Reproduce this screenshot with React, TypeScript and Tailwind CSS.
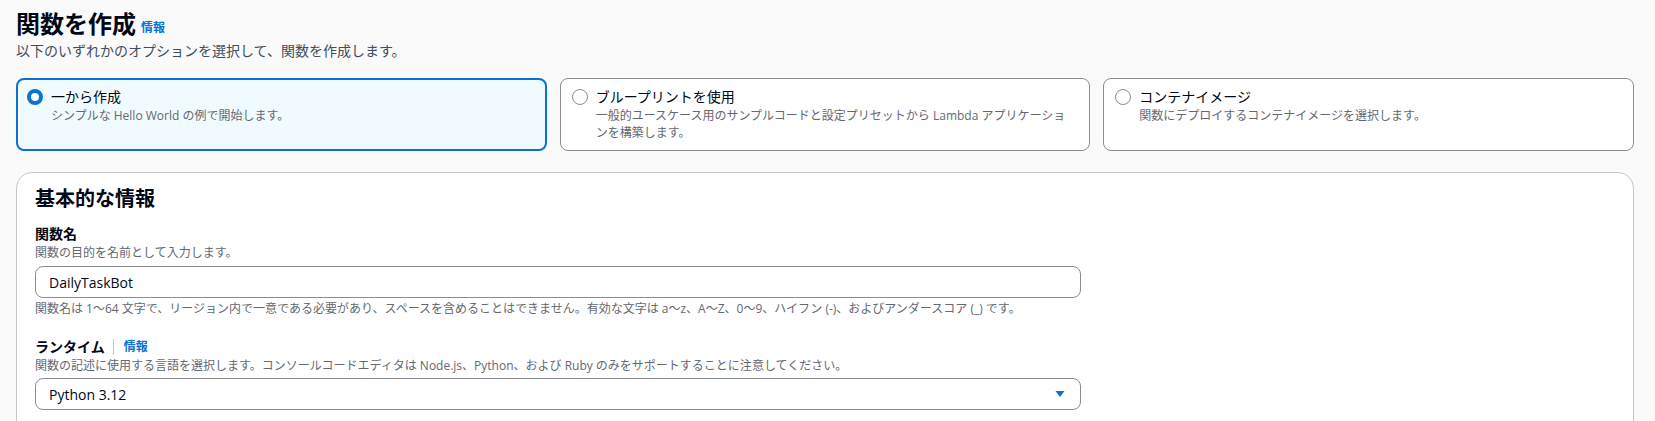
import React from "react";

const font = {
  fontFamily: '"Open Sans", "Noto Sans CJK JP", "Noto Sans", sans-serif',
};

const Radio = ({ checked }: { checked: boolean }) =>
  checked ? (
    <span className="mt-[2px] block h-[16px] w-[16px] shrink-0 rounded-full border-[4px] border-[#0972d3] bg-white" />
  ) : (
    <span className="mt-[2px] block h-[16px] w-[16px] shrink-0 rounded-full border border-[#8c8c94] bg-white" />
  );

const Tile = ({
  checked,
  title,
  children,
}: {
  checked: boolean;
  title: string;
  children: React.ReactNode;
}) => (
  <div
    className={
      checked
        ? "h-[73px] rounded-[8px] border-2 border-[#0972d3] bg-[#f0fbff] pl-[9px] pt-[7px] pr-[18px]"
        : "h-[73px] rounded-[8px] border border-[#8c8c94] bg-white pl-[11px] pt-[8px] pr-[19px]"
    }
  >
    <div className="flex gap-[8px]">
      <Radio checked={checked} />
      <div>
        <div className="text-[14px] leading-[20px] text-[#000716]">{title}</div>
        <div className="text-[12px] leading-[17px] text-[#656871]">{children}</div>
      </div>
    </div>
  </div>
);

const InfoLink = () => (
  <a className="text-[12px] font-bold leading-[16px] text-[#0972d3]" href="#">
    情報
  </a>
);

export default function App() {
  return (
    <div className="min-h-screen bg-[#fafafa] pl-[16px] pr-[21px] pt-[9px]" style={font}>
      <div className="flex items-center gap-[5px]">
        <h1 className="text-[24px] font-bold leading-[30px] text-[#000716]">関数を作成</h1>
        <span className="pt-[3px]">
          <InfoLink />
        </span>
      </div>
      <p className="mt-[2px] text-[14px] leading-[20px] text-[#414d5c]">
        以下のいずれかのオプションを選択して、関数を作成します。
      </p>

      <div className="mt-[17px] grid grid-cols-3 gap-[13px]">
        <Tile checked title="一から作成">
          シンプルな Hello World の例で開始します。
        </Tile>
        <Tile checked={false} title="ブループリントを使用">
          一般的ユースケース用のサンプルコードと設定プリセットから Lambda アプリケーショ
          <br />
          ンを構築します。
        </Tile>
        <Tile checked={false} title="コンテナイメージ">
          関数にデプロイするコンテナイメージを選択します。
        </Tile>
      </div>

      <div className="mt-[21px] rounded-[16px] border border-[#c6c6cd] bg-white pb-[40px] pl-[18px] pt-[14px]">
        <h2 className="text-[20px] font-bold leading-[24px] text-[#000716]">基本的な情報</h2>

        <div className="mt-[13px] w-[1046px]">
          <div className="text-[14px] font-bold leading-[20px] text-[#000716]">関数名</div>
          <div className="text-[12px] leading-[18px] text-[#656871]">
            関数の目的を名前として入力します。
          </div>
          <div className="mt-[4px] flex h-[32px] items-center rounded-[8px] border border-[#8c8c94] bg-white pl-[13px] text-[14px] text-[#000716]">
            DailyTaskBot
          </div>
          <div className="mt-[2px] text-[12px] leading-[18px] text-[#656871]">
            関数名は 1～64 文字で、リージョン内で一意である必要があり、スペースを含めることはできません。有効な文字は a～z、A～Z、0～9、ハイフン (-)、およびアンダースコア (_) です。
          </div>

          <div className="mt-[19px] flex items-center text-[14px] font-bold leading-[20px] text-[#000716]">
            ランタイム
            <span className="ml-[8px] mr-[10px] h-[16px] w-px bg-[#c6c6cd]" />
            <InfoLink />
          </div>
          <div className="text-[12px] leading-[18px] text-[#656871]">
            関数の記述に使用する言語を選択します。コンソールコードエディタは Node.js、Python、および Ruby のみをサポートすることに注意してください。
          </div>
          <div className="mt-[3px] flex h-[32px] items-center justify-between rounded-[8px] border border-[#8c8c94] bg-white pl-[13px] pr-[12px] text-[14px] text-[#000716]">
            <span>Python 3.12</span>
            <svg width="16" height="16" viewBox="0 0 16 16">
              <path d="M3.5 5h9L8 11z" fill="#0972d3" />
            </svg>
          </div>
        </div>
      </div>
    </div>
  );
}
